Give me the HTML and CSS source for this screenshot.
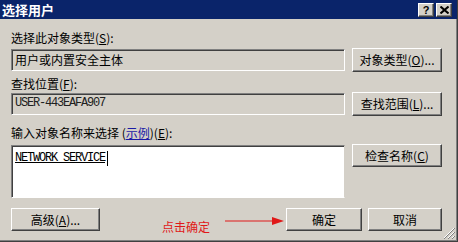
FILE: index.html
```html
<!DOCTYPE html>
<html lang="zh-CN">
<head>
  <meta charset="UTF-8">
  <title>选择用户</title>
  <link rel="stylesheet" href="styles.css">
</head>
<body>

  <!-- Ventana del diálogo -->
  <div class="ventana">
    <div class="titulo">
      <span class="titulo-texto">选择用户</span>
      <div class="titulo-botones">
        <span class="tbtn">?</span>
        <span class="tbtn">
          <svg width="9" height="8" viewBox="0 0 9 8"><path d="M0.5 0.5 L8.5 7.5 M8.5 0.5 L0.5 7.5" stroke="#000" stroke-width="2"/></svg>
        </span>
      </div>
    </div>

    <div class="cuerpo">
      <div class="etiqueta">选择此对象类型(<u>S</u>):</div>
      <div class="fila fila-1">
        <div class="campo">用户或内置安全主体</div>
        <button class="boton">对象类型(<u>O</u>)...</button>
      </div>

      <div class="etiqueta etiqueta-2">查找位置(<u>F</u>):</div>
      <div class="fila fila-2">
        <div class="campo mono">USER-443EAFA907</div>
        <button class="boton">查找范围(<u>L</u>)...</button>
      </div>

      <div class="etiqueta etiqueta-3">输入对象名称来选择 (<a class="enlace">示例</a>)(<u>E</u>):</div>
      <div class="fila fila-3">
        <div class="nombres"><span class="nombre">NETWORK SERVICE</span><span class="cursor"></span></div>
        <button class="boton">检查名称(<u>C</u>)</button>
      </div>

      <div class="pie">
        <button class="boton boton-avanzado">高级(<u>A</u>)...</button>
        <div class="nota">
          <span class="nota-texto">点击确定</span>
          <svg class="flecha" width="60" height="10" viewBox="0 0 60 10">
            <line x1="0" y1="5" x2="50" y2="5" stroke="#e01818" stroke-width="1.2"/>
            <polygon points="47,1 59,5 47,9" fill="#e01818"/>
          </svg>
        </div>
        <button class="boton boton-ok">确定</button>
        <button class="boton boton-cancelar">取消</button>
      </div>
    </div>

    <!-- Agarre para redimensionar -->
    <svg class="agarre" width="12" height="12" viewBox="0 0 12 12">
      <path d="M11 1 L1 11 M11 5 L5 11 M11 9 L9 11" stroke="#fff" stroke-width="1"/>
      <path d="M12 1 L1 12 M12 5 L5 12 M12 9 L9 12" stroke="#808080" stroke-width="1"/>
    </svg>
  </div>

</body>
</html>
```

FILE: styles.css
```css
/* Estilos generales */
body, html {
  margin: 0;
  padding: 0;
  width: 458px;
  height: 242px;
  overflow: hidden;
  background-color: #d4d0c8;
  font-family: "Noto Sans CJK SC", "Liberation Sans", sans-serif;
  font-size: 12px;
  color: #000;
}

.ventana {
  position: relative;
  box-sizing: border-box;
  width: 458px;
  height: 242px;
  background-color: #d4d0c8;
  border-right: 1px solid #404040;
  border-bottom: 1px solid #404040;
  box-shadow: inset -1px -1px #808080;
}

/* Barra de título */
.titulo {
  height: 19px;
  background-color: #0a246a;
  display: flex;
  align-items: center;
  justify-content: space-between;
  padding: 0 5px 0 2px;
}

.titulo-texto {
  color: #fff;
  font-weight: bold;
  font-size: 13px;
  line-height: 19px;
}

.titulo-botones {
  display: flex;
  gap: 2px;
}

.tbtn {
  box-sizing: border-box;
  width: 16px;
  height: 14px;
  background-color: #d4d0c8;
  border-top: 1px solid #fff;
  border-left: 1px solid #fff;
  border-right: 1px solid #404040;
  border-bottom: 1px solid #404040;
  box-shadow: inset -1px -1px #808080;
  display: flex;
  align-items: center;
  justify-content: center;
  font-family: "Liberation Sans", sans-serif;
  font-weight: bold;
  font-size: 11px;
  line-height: 12px;
}

/* Contenido */
.cuerpo {
  padding: 12px 15px 0 11px;
}

.etiqueta {
  height: 14px;
  line-height: 14px;
  white-space: nowrap;
}

.etiqueta-2 {
  margin-top: 5px;
}

.etiqueta-3 {
  margin-top: 10px;
}

.enlace {
  color: #1a1aa6;
  text-decoration: underline;
}

.fila {
  display: flex;
  align-items: center;
  gap: 7px;
  margin-top: 3px;
}

.fila-2 {
  margin-top: 1px;
}

.fila-3 {
  align-items: flex-start;
  margin-top: 4px;
}

.campo {
  flex: 1;
  box-sizing: border-box;
  height: 22px;
  padding: 0 3px;
  line-height: 19px;
  border-top: 1px solid #808080;
  border-left: 1px solid #808080;
  border-right: 1px solid #fff;
  border-bottom: 1px solid #fff;
  box-shadow: inset 1px 1px #404040;
  white-space: nowrap;
}

.mono {
  font-family: "Liberation Mono", monospace;
  font-size: 12px;
  letter-spacing: -1.2px;
  color: #202020;
}

.nombres {
  flex: 1;
  box-sizing: border-box;
  height: 53px;
  margin-top: 1px;
  padding: 5px 3px;
  background-color: #fff;
  border-top: 1px solid #808080;
  border-left: 1px solid #808080;
  border-right: 1px solid #d4d0c8;
  border-bottom: 1px solid #fff;
  box-shadow: inset 1px 1px #404040;
  display: flex;
  align-items: flex-start;
}

.nombre {
  font-family: "Liberation Mono", monospace;
  font-size: 12px;
  letter-spacing: -1.2px;
  line-height: 14px;
  text-decoration: underline;
}

.cursor {
  width: 1px;
  height: 15px;
  margin-left: 2px;
  background-color: #000;
}

/* Botones */
.boton {
  box-sizing: border-box;
  width: 90px;
  height: 24px;
  padding: 0;
  background-color: #d4d0c8;
  border: none;
  border-top: 1px solid #fff;
  border-left: 1px solid #fff;
  border-right: 1px solid #404040;
  border-bottom: 1px solid #404040;
  box-shadow: inset -1px -1px #808080;
  font-family: inherit;
  font-size: 12px;
  color: #000;
  line-height: 20px;
  white-space: nowrap;
}

.fila-3 .boton {
  height: 23px;
}

/* Pie del diálogo */
.pie {
  display: flex;
  align-items: flex-start;
  margin-top: 10px;
}

.pie .boton {
  height: 23px;
}

.boton-avanzado {
  width: 89px;
}

.nota {
  display: flex;
  align-items: flex-start;
  margin-left: 62px;
  margin-top: 12px;
}

.nota-texto {
  color: #e01818;
  line-height: 14px;
}

.flecha {
  margin-left: 15px;
  margin-top: -4px;
}

.boton-ok {
  width: 76px;
  margin-left: auto;
}

.boton-cancelar {
  width: 74px;
  margin-left: 6px;
}

.agarre {
  position: absolute;
  right: 2px;
  bottom: 2px;
}
```
